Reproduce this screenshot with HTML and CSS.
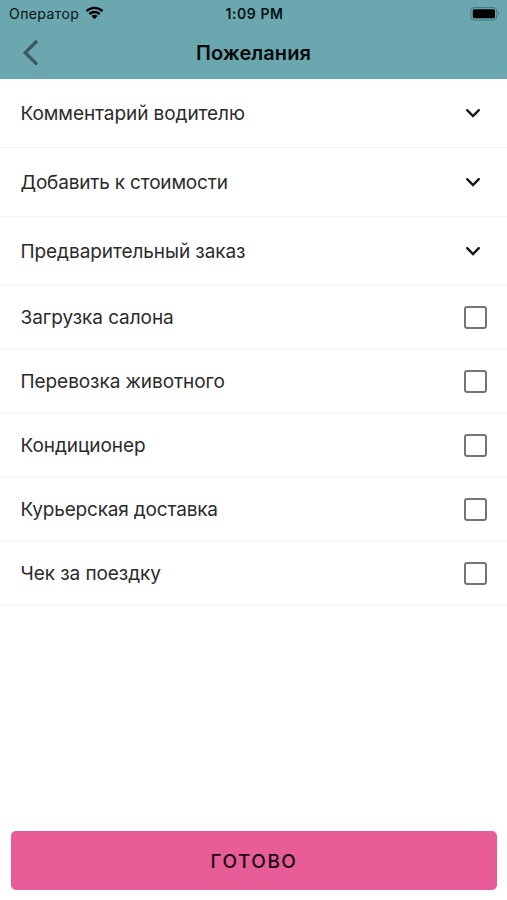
FILE: index.html
```html
<!DOCTYPE html>
<html lang="ru">
<head>
<meta charset="utf-8">
<title>Пожелания</title>
<link rel="stylesheet" href="styles.css">
</head>
<body>
<header class="header">
  <div class="status">
    <div class="carrier"><span class="carrier-name">Оператор</span>
      <svg class="wifi" width="19" height="14" viewBox="0 0 18 14"><path d="M1 5.2a11.5 11.5 0 0 1 16 0M3.8 8.1a7.5 7.5 0 0 1 10.4 0" fill="none" stroke="#000" stroke-width="2.3"/><path d="M9 13.2 5.9 10.1a4.4 4.4 0 0 1 6.2 0z"/></svg>
    </div>
    <time class="time">1:09 PM</time>
    <svg class="battery" width="30" height="14" viewBox="0 0 30 14"><rect x=".8" y=".6" width="26" height="12.4" rx="3.5" fill="none" stroke="#44757c"/><rect x="2.8" y="2.3" width="22.2" height="9" rx="1.5"/><path d="M28 4.8q2 2 0 4z" fill="#44757c"/></svg>
  </div>
  <div class="navbar">
    <svg class="back" width="18" height="28" viewBox="0 0 18 28"><path d="M16 2 4.2 13.7 16 25.4" fill="none" stroke="#3e5861" stroke-width="3.3"/></svg>
    <h1 class="title">Пожелания</h1>
  </div>
</header>
<main class="list">
  <div class="row expand"><span class="label">Комментарий водителю</span><svg class="chevron" width="16" height="10" viewBox="0 0 16 10"><path d="m2.2 2.2 5.8 5.8 5.8-5.8"/></svg></div>
  <div class="row expand"><span class="label tight">Добавить к стоимости</span><svg class="chevron" width="16" height="10" viewBox="0 0 16 10"><path d="m2.2 2.2 5.8 5.8 5.8-5.8"/></svg></div>
  <div class="row expand"><span class="label">Предварительный заказ</span><svg class="chevron" width="16" height="10" viewBox="0 0 16 10"><path d="m2.2 2.2 5.8 5.8 5.8-5.8"/></svg></div>
  <div class="row"><span class="label">Загрузка салона</span><span class="checkbox"></span></div>
  <div class="row"><span class="label">Перевозка животного</span><span class="checkbox"></span></div>
  <div class="row"><span class="label">Кондиционер</span><span class="checkbox"></span></div>
  <div class="row"><span class="label tight">Курьерская доставка</span><span class="checkbox"></span></div>
  <div class="row"><span class="label">Чек за поездку</span><span class="checkbox"></span></div>
</main>
<button class="done">ГОТОВО</button>
</body>
</html>
```
FILE: styles.css
```css
* { box-sizing: border-box; }
body { margin: 0; height: 900px; display: flex; flex-direction: column; background: #fff; color: #2b2b2b; font-family: Inter, "Liberation Sans", sans-serif; overflow: hidden; }
.header { height: 79px; background: #6ba7af; color: #0a1214; }
.status { height: 26px; display: grid; grid-template-columns: 1fr auto 1fr; align-items: center; padding: 1px 7px 0 9px; }
.carrier { display: flex; align-items: center; gap: 6px; font-size: 14px; }
.carrier-name { letter-spacing: .42px; }
.wifi { margin-top: -2px; }
.time { font-size: 14px; font-weight: 600; letter-spacing: .55px; }
.battery { justify-self: end; }
.navbar { height: 53px; display: grid; grid-template-columns: 60px 1fr 60px; align-items: center; }
.back { margin-left: 21px; }
.title { margin: 0; text-align: center; font-size: 20px; font-weight: 600; letter-spacing: .08px; color: #050a0b; }
.list { flex: 1; }
.row { height: 64px; display: flex; align-items: center; justify-content: space-between; padding: 0 20px 0 20.5px; border-bottom: 1px solid #f3f3f3; }
.expand { height: 69px; padding-right: 26px; }
.label { font-size: 19px; letter-spacing: -.07px; white-space: nowrap; }
.tight { letter-spacing: -.18px; }
.chevron { fill: none; stroke: #161616; stroke-width: 2.4; stroke-linecap: round; }
.checkbox { width: 23px; height: 23px; border: 2px solid #757575; border-radius: 3px; }
.done { height: 59px; margin: 0 10px 10px 11px; padding: 1px 0 0; border: 0; border-radius: 5px; background: #e85d98; color: #1a0a11; font: 500 19px Inter, "Liberation Sans", sans-serif; letter-spacing: 1.5px; }
```
